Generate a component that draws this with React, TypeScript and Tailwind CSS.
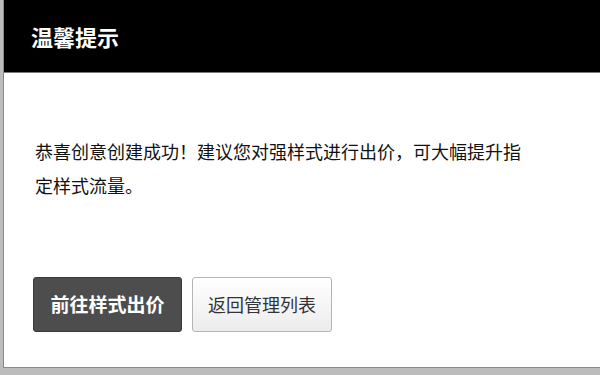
import React from 'react';

const App: React.FC = () => {
    return (
        <div
            className="w-[600px] h-[375px] bg-[#bcbcbc] pl-[3px] pb-[7px] overflow-hidden"
            style={{ fontFamily: '"Noto Sans CJK SC", "Noto Sans", sans-serif' }}
        >
            <div className="h-full bg-white border-l border-b border-[#8a8a8a] flex flex-col">
                <div className="h-[73px] bg-black border-b border-[#7a7a7a] flex items-center pl-[27px] shrink-0">
                    <h2 className="text-white text-[22px] font-bold leading-none">温馨提示</h2>
                </div>

                <p className="mt-[61px] pl-[31px] w-[525px] text-[18px] leading-[34px] text-[#111]">
                    恭喜创意创建成功！建议您对强样式进行出价，可大幅提升指定样式流量。
                </p>

                <div className="mt-[75px] pl-[29px] flex items-center gap-[10px]">
                    <button className="w-[149px] h-[55px] rounded-[3px] bg-[#4d4d4d] border border-[#3a3a3a] text-white text-[19px] font-bold">
                        前往样式出价
                    </button>
                    <button className="w-[140px] h-[55px] rounded-[3px] bg-gradient-to-b from-white to-[#ececec] border border-[#b5b5b5] text-[#333] text-[18px]">
                        返回管理列表
                    </button>
                </div>
            </div>
        </div>
    );
};

export default App;
